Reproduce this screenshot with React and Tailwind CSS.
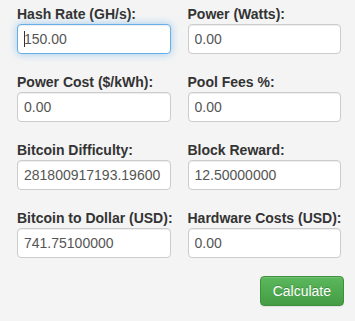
import { useState } from "react";

const fields = [
  { label: "Hash Rate (GH/s):", value: "150.00", focused: true },
  { label: "Power (Watts):", value: "0.00" },
  { label: "Power Cost ($/kWh):", value: "0.00" },
  { label: "Pool Fees %:", value: "0.00" },
  { label: "Bitcoin Difficulty:", value: "281800917193.19600" },
  { label: "Block Reward:", value: "12.50000000" },
  { label: "Bitcoin to Dollar (USD):", value: "741.75100000" },
  { label: "Hardware Costs (USD):", value: "0.00" },
];

function Field({ label, value, focused }) {
  const [val, setVal] = useState(value);
  return (
    <div className="flex flex-col">
      <label className="h-5 text-[14px] leading-5 font-bold text-[#333] whitespace-nowrap">
        {label}
      </label>
      <div className="relative">
        <input
          type="text"
          value={val}
          onChange={(e) => setVal(e.target.value)}
          className={
            focused
              ? "block w-full h-[30px] px-[6px] text-[14px] text-[#555] bg-white rounded-[4px] border border-[#66afe9] outline-none shadow-[inset_0_1px_1px_rgba(0,0,0,0.075),0_0_8px_rgba(102,175,233,0.6)]"
              : "block w-full h-[30px] px-[6px] text-[14px] text-[#555] bg-white rounded-[4px] border border-[#ccc] outline-none shadow-[inset_0_1px_1px_rgba(0,0,0,0.075)]"
          }
        />
        {focused && (
          <span className="absolute left-[7px] top-[7px] w-px h-[16px] bg-[#333]" />
        )}
      </div>
    </div>
  );
}

export default function App() {
  return (
    <div className="min-h-screen bg-[#f4f4f4] font-['Liberation_Sans',Arial,sans-serif]">
      <div className="ml-[17px] w-[324px] pt-[4px]">
        <div className="grid grid-cols-2 gap-x-[17px] gap-y-[18px]">
          {fields.map((f) => (
            <Field key={f.label} {...f} />
          ))}
        </div>
        <div className="flex justify-end mt-[18px] -mr-[3px]">
          <button className="h-[30px] px-[12px] text-[14px] text-white rounded-[4px] border border-[#3e8f3e] bg-gradient-to-b from-[#5cb85c] to-[#449d44] [text-shadow:0_-1px_0_rgba(0,0,0,0.2)] shadow-[inset_0_1px_0_rgba(255,255,255,0.15),0_1px_1px_rgba(0,0,0,0.075)]">
            Calculate
          </button>
        </div>
      </div>
    </div>
  );
}
